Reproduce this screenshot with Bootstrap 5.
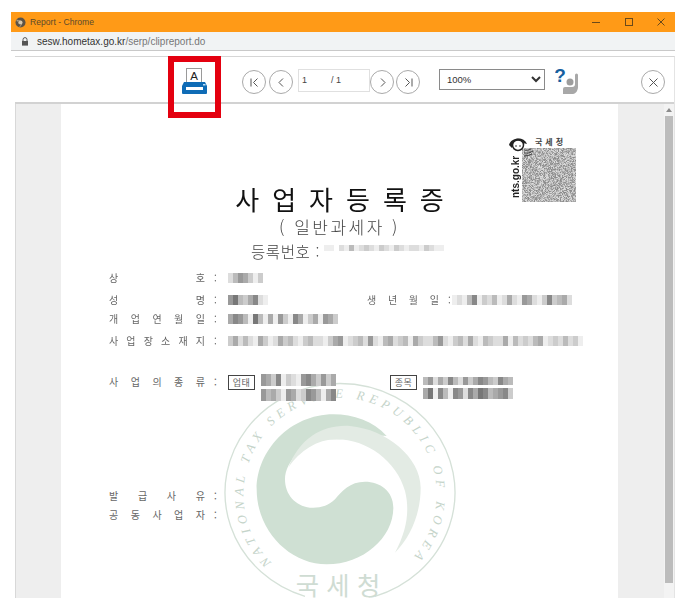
<!DOCTYPE html>
<html lang="ko">
  <head>
    <meta charset="UTF-8" />
    <meta name="viewport" content="width=device-width, initial-scale=1.0" />
    <title>Report - Chrome</title>
    <link href="https://cdn.jsdelivr.net/npm/bootstrap@5.3.0/dist/css/bootstrap.min.css" rel="stylesheet" />
    <style>
      html, body { height: 100%; overflow: hidden; background: #fff; }
      body { font-family: "Liberation Sans", "Noto Sans CJK KR", sans-serif; }

      #win { position: relative; margin: 12px 10px 0 11px; height: 586px; overflow: hidden; }
      #titlebar { height: 20px; background: #ff9a17; color: #5b4a2c; font-size: 8.6px; padding: 0 9px 0 4px; }
      #titlebar svg { display: block; }
      .wmin { margin-right: 23px; }
      .wmax { margin-right: 22px; }
      #urlbar { height: 19px; background: #f1f3f4; border-bottom: 1px solid #c9c9c9; font-size: 10px; padding-left: 10px; color: #777; }
      #urlbar b { font-weight: 400; color: #333; }
      #viewer { margin: 5px 0 0 4px; border-top: 1px solid #d6d6d6; border-right: 1px solid #e4e4e4; }

      #tools { height: 47px; background: #fff; border-bottom: 2px solid #d2d2d2; }
      #tools > * { position: absolute; }
      .rnd { width: 24px; height: 24px; top: 58px; border: 1px solid #a9a9a9; border-radius: 50%; background: #fff; padding: 0; }
      .rnd svg { display: block; margin: auto; }
      .nav1 { left: 231px; }
      .nav2 { left: 258px; }
      .nav3 { left: 359px; }
      .nav4 { left: 385px; }
      .nav5 { left: 630px; }
      #printico { left: 170px; top: 56px; }
      #helpico { left: 544px; top: 56px; }
      #pgbox { left: 287px; top: 57px; width: 72px; height: 23px; border: 1px solid #e0e0e0; font-size: 9px; color: #444; line-height: 21px; }
      #pgbox span { position: absolute; top: 0; }
      .pgcur { left: 3px; }
      .pgall { left: 32px; }
      #zoomsel { left: 428px; top: 57px; width: 106px; height: 21px; font-size: 9.5px; border: 1px solid #8a8a8a; border-radius: 0; padding: 0 0 0 3px; color: #333; background: #fff; }
      #mark { left: 157px; top: 44px; width: 53px; height: 62px; border: 6px solid #e4000f; z-index: 5; }

      #docarea { height: 495px; background: #eeeeee; border-left: 1px solid #d8d8d8; padding: 0 10px 0 45px; position: relative; }
      #sheet { position: relative; width: 557px; height: 100%; background: #fff; overflow: hidden; padding-left: 48px; color: #333; font-family: "Noto Sans CJK KR", "Liberation Sans", sans-serif; }
      #sbar { position: absolute; right: 0; top: 0; bottom: 0; width: 10px; background: #f3f3f3; }
      #sbar i { position: absolute; left: 1px; right: 1px; top: 12px; height: 467px; background: #bcbcbc; }
      #sbar u { position: absolute; left: 2px; top: 4px; border: 3px solid transparent; border-bottom: 4px solid #8c8c8c; border-top: 0; }

      #seal { position: absolute; left: 149px; top: 267px; }
      #stamp { position: absolute; left: 447px; top: 32px; width: 70px; height: 68px; }
      #stamp canvas { position: absolute; left: 14px; top: 12px; width: 54px; height: 54px; filter: blur(.4px); }
      #stamp svg { position: absolute; left: 1px; top: 0; z-index: 1; }
      #stamp .nts { position: absolute; left: 2px; top: 20px; font: 700 10px/11px "Liberation Sans", sans-serif; writing-mode: vertical-rl; transform: rotate(180deg); color: #222; height: 42px; text-align: left; }
      #stamp .nts2 { position: absolute; left: 27px; top: 0; font-size: 8px; line-height: 12px; font-weight: 700; letter-spacing: 3px; color: #444; }

      .ttl { position: relative; text-align: center; margin-left: -48px; }
      .ttl1 { padding-top: 77px; padding-left: 13px; font-size: 26px; line-height: 36px; letter-spacing: 13px; color: #111; font-weight: 400; }
      .ttl2 { font-size: 17px; line-height: 24px; letter-spacing: 2.500px; color: #444; font-weight: 300; margin-top: -2px; }
      .ttl3 { font-size: 15.500px; line-height: 24px; color: #444; font-weight: 300; padding-left: 190px; text-align: left; letter-spacing: .6px; }
      .ttl3 .smear { height: 6px; margin-top: -6px; }

      .frow { position: relative; font-size: 10px; line-height: 14px; color: #666; }
      .flabel { width: 96px; text-align-last: justify; flex: none; }
      .fcolon { width: 23px; padding-left: 9px; flex: none; }
      .gap5 { margin-top: 5px; }
      .gap8 { margin-top: 8px; }
      .gap27 { margin-top: 27px; }
      .gap88 { margin-top: 88px; }
      .birth-l { position: absolute; left: 258px; width: 72px; }
      .birth-c { position: absolute; left: 330px; }
      .birth-v { position: absolute; left: 343px; }
      .tagbox { border: 1px solid #444; font-size: 9px; line-height: 13px; width: 27px; text-align: center; margin-right: 6px; letter-spacing: .5px; }
      .tag2 { position: absolute; left: 281px; top: 0; }
      .val2 { position: absolute; left: 314px; top: 2px; }
      .smear { display: flex; height: 10px; flex: none; filter: blur(.5px); }
      .smear span { display: block; height: 100%; }
      .sm-up { height: 12px; margin-top: -1px; }
      .sm-lo { height: 12px; margin-top: 3px; }
      .sm-t { height: 8px; }
      .sm-b { height: 11px; margin-top: 3px; }
    </style>
  </head>
  <body>
    <div id="win">
      <div id="titlebar" class="d-flex align-items-center">
        <svg width="11" height="11" viewBox="0 0 12 12" class="me-1"><circle cx="6" cy="6" r="5.500" fill="#5d5346"/><circle cx="6" cy="6" r="2.200" fill="#d8c9ae"/><path d="M1.500 4H6M7.500 7.500 5 11M4.500 7.500 2.500 3" stroke="#b5a68c" stroke-width=".9"/></svg>
        <span>Report - Chrome</span>
        <div class="ms-auto d-flex align-items-center">
          <svg class="wmin" width="10" height="10" viewBox="0 0 10 10"><path d="M1 5.500H9" stroke="#6b4a1a" stroke-width="1"/></svg>
          <svg class="wmax" width="10" height="10" viewBox="0 0 10 10"><rect x="1.500" y="1.500" width="7" height="7" fill="none" stroke="#6b4a1a"/></svg>
          <svg width="10" height="10" viewBox="0 0 10 10"><path d="M1.500 1.500 8.500 8.500M8.500 1.500 1.500 8.500" stroke="#6b4a1a"/></svg>
        </div>
      </div>
      <div id="urlbar" class="d-flex align-items-center">
        <svg width="8" height="9" viewBox="0 0 8 9" class="me-2"><path d="M2 4V2.600a2 2 0 0 1 4 0V4" fill="none" stroke="#555"/><rect x="1" y="4" width="6" height="4.600" fill="#555"/></svg>
        <span><b>sesw.hometax.go.kr</b>/serp/clipreport.do</span>
      </div>

      <div id="viewer">
        <div id="tools">
          <svg id="printico" width="27" height="27" viewBox="0 0 27 27">
            <rect x="5.500" y="0.500" width="15" height="15" fill="#fff" stroke="#9a9a9a"/>
            <text x="13" y="12" font-family="Liberation Sans" font-size="11.500" text-anchor="middle" fill="#222">A</text>
            <path d="M3 14H24L26 18V25a1 1 0 0 1-1 1H2a1 1 0 0 1-1-1V18Z" fill="#0f6cb6"/>
            <rect x="5" y="19" width="17" height="3" fill="#fff"/>
            <rect x="22" y="16" width="2.500" height="1.500" fill="#bfe0f5"/>
          </svg>

          <button class="rnd nav1" aria-label="처음"><svg width="11" height="11" viewBox="0 0 11 11"><path d="M2 1.500V9.500M8.500 1.500 4.500 5.500 8.500 9.500" fill="none" stroke="#555" stroke-width="1"/></svg></button>
          <button class="rnd nav2" aria-label="이전"><svg width="11" height="11" viewBox="0 0 11 11"><path d="M7 1.500 3 5.500 7 9.500" fill="none" stroke="#555" stroke-width="1"/></svg></button>
          <div id="pgbox"><span class="pgcur">1</span><span class="pgall">/ 1</span></div>
          <button class="rnd nav3" aria-label="다음"><svg width="11" height="11" viewBox="0 0 11 11"><path d="M4 1.500 8 5.500 4 9.500" fill="none" stroke="#555" stroke-width="1"/></svg></button>
          <button class="rnd nav4" aria-label="마지막"><svg width="11" height="11" viewBox="0 0 11 11"><path d="M9 1.500V9.500M2.500 1.500 6.500 5.500 2.500 9.500" fill="none" stroke="#555" stroke-width="1"/></svg></button>
          <select id="zoomsel"><option>100%</option></select>

          <svg id="helpico" width="26" height="27" viewBox="0 0 26 27">
            <text x="5" y="14" font-family="Liberation Sans" font-size="19" font-weight="700" text-anchor="middle" fill="#17609f">?</text>
            <circle cx="15" cy="14" r="3.500" fill="#9d9d9d"/>
            <path d="M8 26V21a2 2 0 0 1 2-2H17c2 0 3-1 3-3V7a1.500 1.500 0 0 1 3 0V19c0 3-2 7-5 7Z" fill="#a8a8a8"/>
          </svg>
          <button class="rnd nav5" aria-label="닫기"><svg width="11" height="11" viewBox="0 0 11 11"><path d="M1.500 1.500 9.500 9.500M9.500 1.500 1.500 9.500" fill="none" stroke="#555" stroke-width="1"/></svg></button>
          <div id="mark"></div>
        </div>

        <div id="docarea">
          <div id="sheet">
            <svg id="seal" width="260" height="238" viewBox="0 0 780 714" fill="none">
              <path d="M285 676A345 327 0 1 1 495 676" stroke="#d5e1d8" stroke-width="4"/>
              <path d="M370 130C240 130 140 240 140 355C140 480 240 580 350 580C460 580 550 500 550 410C550 360 510 332 465 332C420 332 395 360 375 385C355 405 330 412 300 410C255 405 225 370 225 325C225 270 290 200 370 205C440 205 500 190 530 195C490 150 430 130 370 130Z" fill="#cfe0d3"/>
              <path d="M235 290C270 200 340 160 420 165C530 175 632 260 632 350C632 430 600 500 555 545C590 480 600 420 585 360C560 270 470 205 380 205C320 205 270 240 235 290Z" fill="#e3ebe4"/>
              <defs><path id="ring" d="M185 575A290 290 0 1 1 595 575"/></defs>
              <text font-family="Liberation Serif" font-size="38" font-style="italic" fill="#c5d4ca" textLength="1340"><textPath href="#ring">NATIONAL TAX SERVICE REPUBLIC OF KOREA</textPath></text>
              <text x="395" y="672" text-anchor="middle" font-family="Noto Sans CJK KR" font-size="76" fill="#cfdcd3" letter-spacing="22">국세청</text>
            </svg>

            <div id="stamp">
              <svg width="24" height="26" viewBox="0 0 24 26">
                <circle cx="9" cy="9" r="5.500" fill="#fff" stroke="#222" stroke-width="1.500"/>
                <path d="M0 9C2 1 15 0 18 8L14 7C11 4 6 4 4 8L3 12Z" fill="#222"/>
                <circle cx="7" cy="10" r=".8" fill="#222"/><circle cx="11" cy="10" r=".8" fill="#222"/>
                <path d="M15 14a8 8 0 0 0 7-1M15 17a11 11 0 0 0 9-2M15 20a14 14 0 0 0 8-2" stroke="#444" fill="none"/>
              </svg>
              <span class="nts2">국세청</span>
              <span class="nts">nts.go.kr</span>
              <canvas id="qr" width="54" height="54"></canvas>
            </div>

            <div class="ttl ttl1">사업자등록증</div>
            <div class="ttl ttl2">( 일반과세자 )</div>
            <div class="ttl ttl3 d-flex align-items-center">등록번호 :<div class="smear ms-1" data-s="e,e,f,d,e,b,e,d,c,d,e,c,d,e,c,d,e,d,d,e,c,d,e,e"></div></div>

            <div class="frow d-flex align-items-center gap8"><div class="flabel">상 호</div><div class="fcolon">:</div><div class="smear" data-s="d,b,9,a,c,e,c"></div></div>
            <div class="frow d-flex align-items-center gap8"><div class="flabel">성 명</div><div class="fcolon">:</div><div class="smear" data-s="9,7,b,c,a,8,d,e"></div><div class="flabel birth-l">생 년 월 일</div><div class="fcolon birth-c">:</div><div class="smear birth-v" data-s="e,d,e,b,8,e,c,d,b,e,d,a,d,e,9,a,d,e,c,8,c,b,a,d"></div></div>
            <div class="frow d-flex align-items-center gap5"><div class="flabel">개 업 연 월 일</div><div class="fcolon">:</div><div class="smear" data-s="a,8,9,b,e,7,b,e,a,e,9,c,e,8,a,e,c,a,e,9,a,c"></div></div>
            <div class="frow d-flex align-items-center gap8"><div class="flabel">사 업 장 소 재 지</div><div class="fcolon">:</div><div class="smear" data-s="c,a,d,b,d,e,a,c,e,d,a,c,b,d,e,c,b,d,d,e,c,a,9,e,d,c,b,d,9,d,e,b,a,d,c,b,e,a,c,d,d,b,9,d,e,c,b,d,a,d,e,b,c,d,d,a,e,b,d,c,d,b,a,e,d,c,d,b,d,c,e"></div></div>

            <div class="frow d-flex align-items-start gap27"><div class="flabel">사 업 의 종 류</div><div class="fcolon">:</div><div class="tagbox">업태</div><div><div class="smear sm-up" data-s="9,a,c,8,e,c,d,e,9,8,a,c,9,c,a"></div><div class="smear sm-lo" data-s="9,b,a,c,e,9,a,d,c,8,9,b,e,a,8"></div></div><div class="tagbox tag2">종목</div><div class="val2"><div class="smear sm-t" data-s="b,9,d,a,c,8,b,d,9,c,a,8,9,b,c,8,a,b"></div><div class="smear sm-b" data-s="a,7,e,8,b,e,8,9,d,8,a,7,8,b,a,9,8,c"></div></div></div>

            <div class="frow d-flex gap88"><div class="flabel">발 급 사 유</div><div class="fcolon">:</div></div>
            <div class="frow d-flex gap5"><div class="flabel">공 동 사 업 자</div><div class="fcolon">:</div></div>
          </div>
          <div id="sbar"><u></u><i></i></div>
        </div>
      </div>
    </div>

    <script>
      // 가린 글자 자리: 회색 칸으로 모자이크
      document.querySelectorAll(".smear").forEach((el) => {
        el.dataset.s.split(",").forEach((c) => {
          const cell = document.createElement("span");
          cell.style.width = "5px";
          cell.style.background = "#" + c + c + c;
          el.appendChild(cell);
        });
      });

      // 바코드 노이즈 (시드 고정)
      const ctx = document.getElementById("qr").getContext("2d");
      let seed = 7;
      for (let y = 0; y < 54; y++) {
        for (let x = 0; x < 54; x++) {
          seed = (seed * 1103515245 + 12345) & 0x7fffffff;
          const v = 135 + ((seed >> 16) % 90);
          ctx.fillStyle = `rgb(${v},${v},${v})`;
          ctx.fillRect(x, y, 1, 1);
        }
      }
    </script>
    <script src="https://cdn.jsdelivr.net/npm/bootstrap@5.3.0/dist/js/bootstrap.bundle.min.js"></script>
  </body>
</html>
